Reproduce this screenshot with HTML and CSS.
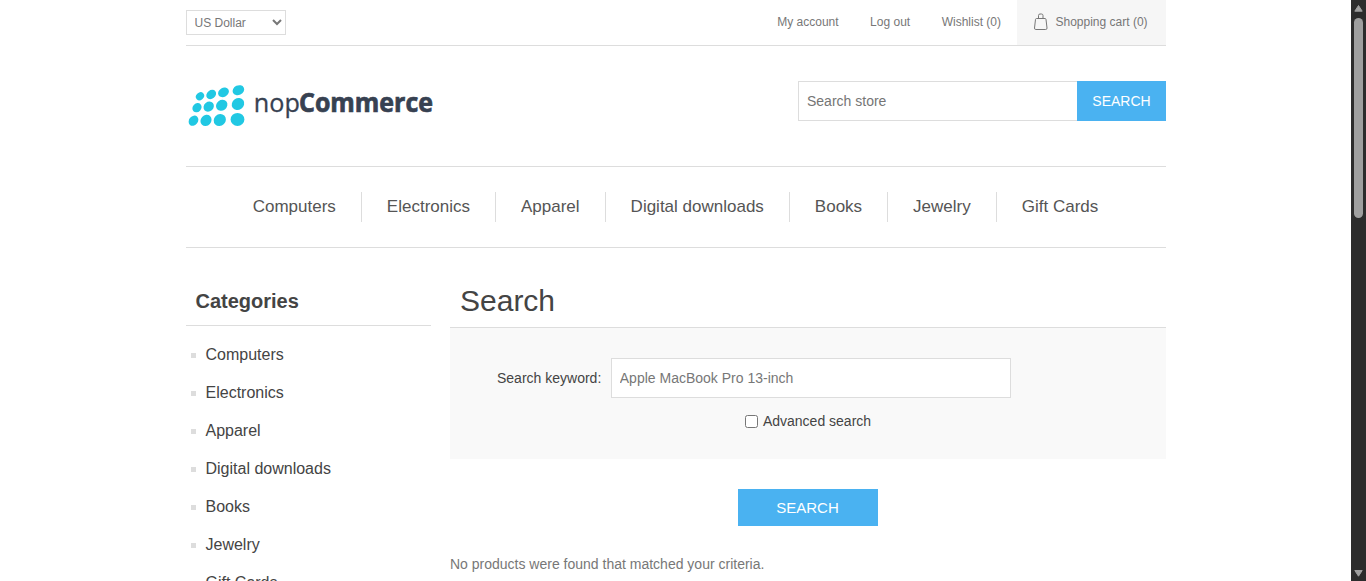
FILE: index.html
```html
<!DOCTYPE html>
<html lang="en">
<head>
<meta charset="utf-8">
<title>Search</title>
<link rel="stylesheet" href="styles.css">
</head>
<body>
<div class="viewport">
  <div class="page">
    <div class="wrapper">
      <header>
        <div class="header-upper">
          <select class="currency" aria-label="Currency"><option>US Dollar</option></select>
          <nav class="header-links">
            <a>My account</a>
            <a>Log out</a>
            <a>Wishlist (0)</a>
            <a class="cart">
              <svg class="bag" width="14" height="17" viewBox="0 0 14 17" fill="none" stroke="#777">
                <path d="M2.500 5.500h8.500q.8 0 1 .9l1 8.600q.1 1.500-1.300 1.500H1.800Q.4 16.500.5 15l1-8.600q.2-.9 1-.9z"/>
                <path d="M4.500 5.500V2.500Q4.500 1 6 1h1.500Q9 1 9 2.500v3"/>
              </svg>
              <span>Shopping cart (0)</span>
            </a>
          </nav>
        </div>
        <div class="header-lower">
          <svg class="logo" width="250" height="50" viewBox="186 80 250 50" role="img" aria-label="nopCommerce">
            <g fill="#21c8e3">
              <ellipse cx="200" cy="96.200" rx="4.400" ry="3.700" transform="rotate(-42 200 96.200)"/>
              <ellipse cx="211.200" cy="94.500" rx="5.300" ry="4.200" transform="rotate(-38 211.200 94.500)"/>
              <ellipse cx="223.500" cy="92.300" rx="5.700" ry="4.500" transform="rotate(-30 223.500 92.300)"/>
              <ellipse cx="238.400" cy="90.200" rx="6" ry="4.800" transform="rotate(-25 238.400 90.200)"/>
              <ellipse cx="197" cy="107.700" rx="5" ry="4.200" transform="rotate(-45 197 107.700)"/>
              <ellipse cx="208.700" cy="106.600" rx="5.500" ry="4.700" transform="rotate(-40 208.700 106.600)"/>
              <ellipse cx="221.700" cy="105.300" rx="6" ry="5.200" transform="rotate(-38 221.700 105.300)"/>
              <ellipse cx="238" cy="104" rx="6.500" ry="5.700" transform="rotate(-35 238 104)"/>
              <ellipse cx="193.500" cy="120.700" rx="5.500" ry="4.400" transform="rotate(-50 193.500 120.700)"/>
              <ellipse cx="206" cy="120.400" rx="6" ry="5.200" transform="rotate(-48 206 120.400)"/>
              <ellipse cx="219.800" cy="120" rx="6.400" ry="5.800" transform="rotate(-45 219.800 120)"/>
              <ellipse cx="237.500" cy="119.400" rx="6.900" ry="6.500"/>
            </g>
            <text class="logo-light" x="253.800" y="112.300" textLength="46" lengthAdjust="spacingAndGlyphs">nop</text>
            <text class="logo-bold" x="299" y="112.300" textLength="134" lengthAdjust="spacingAndGlyphs">Commerce</text>
          </svg>
          <form class="store-search">
            <input type="text" placeholder="Search store" aria-label="Search store">
            <button type="button">SEARCH</button>
          </form>
        </div>
      </header>
      <nav class="menu">
        <a>Computers</a><a>Electronics</a><a>Apparel</a><a>Digital downloads</a><a>Books</a><a>Jewelry</a><a>Gift Cards</a>
      </nav>
      <div class="columns">
        <aside>
          <h2>Categories</h2>
          <ul class="categories">
            <li>Computers</li>
            <li>Electronics</li>
            <li>Apparel</li>
            <li>Digital downloads</li>
            <li>Books</li>
            <li>Jewelry</li>
            <li>Gift Cards</li>
          </ul>
        </aside>
        <main>
          <h1>Search</h1>
          <div class="criteria">
            <div class="keyword">
              <label for="q">Search keyword:</label>
              <input id="q" type="text" value="Apple MacBook Pro 13-inch">
            </div>
            <div class="advanced">
              <input id="adv" type="checkbox">
              <label for="adv">Advanced search</label>
            </div>
          </div>
          <button class="search-button" type="button">SEARCH</button>
          <p class="no-result">No products were found that matched your criteria.</p>
        </main>
      </div>
    </div>
  </div>
  <div class="scrollbar">
    <svg width="15" height="17" viewBox="0 0 15 17"><path d="M7.500 5.500l3.700 5.700H3.800z" fill="#9f9f9f" stroke="#9f9f9f" stroke-linejoin="round"/></svg>
    <div class="thumb"></div>
    <svg class="down" width="15" height="17" viewBox="0 0 15 17"><path d="M7.500 12.200l3.700-5.700H3.800z" fill="#9f9f9f" stroke="#9f9f9f" stroke-linejoin="round"/></svg>
  </div>
</div>
</body>
</html>
```
FILE: styles.css
```css
* { box-sizing: border-box; margin: 0; padding: 0; }
body, input, button, select { font-family: "Liberation Sans", Arial, sans-serif; }
body { font-size: 14px; color: #777; background: #fff; overflow: hidden; }
.viewport { display: flex; height: 581px; overflow: hidden; }
.page { flex: 1; overflow: hidden; }
.wrapper { width: 980px; margin: 0 auto; }

.header-upper { display: flex; justify-content: space-between; height: 46px; border-bottom: 1px solid #ddd; }
.currency { width: 100px; height: 25px; margin-top: 10px; padding: 0 0 0 4px; border: 1px solid #ddd; background: #fff; color: #777; font-size: 12px; }
.header-links { display: flex; font-size: 12px; line-height: 44px; }
.header-links a { margin-right: 31.500px; }
.header-links a:nth-child(3) { margin-right: 15.500px; }
.header-links .cart { display: flex; align-items: center; gap: 7.500px; width: 149px; margin: 0; padding: 0 0 1px 17.500px; background: #f6f6f6; }
.bag { margin-top: -2px; }

.header-lower { display: flex; justify-content: space-between; height: 121px; padding-top: 34px; border-bottom: 1px solid #ddd; }
.logo-light, .logo-bold { font-family: "Open Sans", "Noto Sans", sans-serif; font-size: 26px; fill: #374151; stroke: #374151; stroke-width: .3px; }
.logo-bold { font-weight: 700; stroke-width: .7px; }
.store-search { display: flex; height: 40px; margin-top: 1px; }
.store-search input { width: 279px; padding: 0 8.500px; border: 1px solid #ddd; border-right: 0; font-size: 14px; color: #777; }
.store-search input::placeholder { color: #757575; }
.store-search button { width: 89px; padding-left: 1px; border: 0; background: #4ab2f1; color: #fff; font-size: 14px; }

.menu { display: flex; justify-content: center; height: 81px; padding-top: 25px; border-bottom: 1px solid #ddd; color: #555; font-size: 17px; }
.menu a { height: 30px; padding: 0 25px; line-height: 30px; }
.menu a + a { border-left: 1px solid #ddd; }

.columns { display: flex; justify-content: space-between; padding-top: 30px; color: #444; }
aside { width: 245px; }
h2 { height: 48px; padding-left: 10px; border-bottom: 1px solid #ddd; font-size: 20px; line-height: 46px; }
.categories { padding: 10px 0 0 5px; list-style: none; font-size: 16px; }
.categories li { display: flex; align-items: center; gap: 10px; height: 38px; line-height: 38px; }
.categories li::before { content: ""; width: 5px; height: 5px; background: #ddd; }
main { width: 716px; }
h1 { height: 50px; padding-left: 10.500px; border-bottom: 1px solid #ddd; font-size: 30px; font-weight: 400; line-height: 45px; }
.criteria { height: 131px; padding-top: 30px; background: #f9f9f9; }
.keyword { display: flex; align-items: center; gap: 9.500px; padding-left: 47.500px; }
.keyword input { width: 400px; height: 40px; padding: 0 8px; border: 1px solid #ddd; font-size: 14px; color: #777; }
.advanced { display: flex; align-items: center; justify-content: center; gap: 5px; height: 16px; margin-top: 15px; padding-left: 1px; }
.advanced input { width: 13px; height: 13px; }
.search-button { display: block; width: 140px; height: 37px; margin: 30px auto 0; border: 0; background: #4ab2f1; color: #fff; font-size: 15px; }
.no-result { margin-top: 30px; padding-left: .5px; color: #777; line-height: 17px; }

.scrollbar { display: flex; flex-direction: column; align-items: center; width: 15px; background: #2c2c2c; }
.thumb { width: 9px; height: 200px; margin-top: 1px; border-radius: 5px; background: #9f9f9f; }
.down { margin-top: auto; }
```
